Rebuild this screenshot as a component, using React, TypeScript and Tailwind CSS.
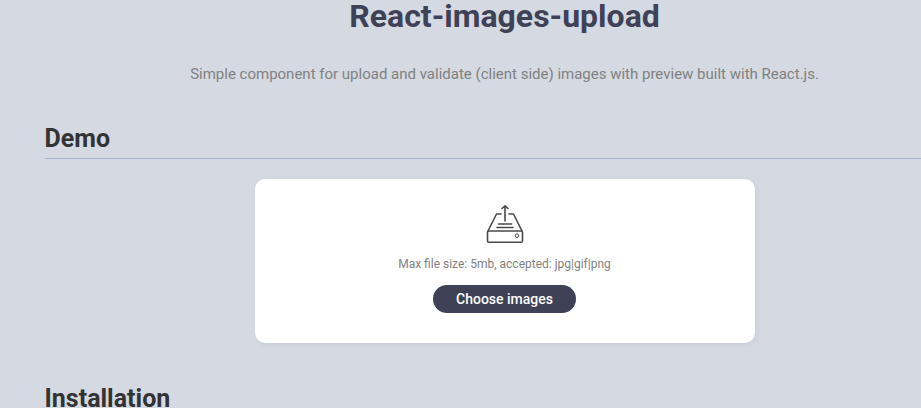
export default function App() {
  return (
    <main className="h-[408px] w-[921px] overflow-hidden bg-[#d5d9e2] font-['Roboto',sans-serif]">
      <div className="w-[921px] pl-[44.5px]">
        <header className="w-[920px] text-center">
          <h1 className="h-[34px] text-[32px] leading-[32px] font-bold text-[#3f4257]">React-images-upload</h1>
          <p className="mt-[30px] text-[15px] leading-5 text-[#818181]">
            Simple component for upload and validate (client side) images with preview built with React.js.
          </p>
        </header>
        <h2 className="mt-[40px] h-[35px] border-b border-[#a5b4d0] text-[25px] leading-[29px] font-bold text-[#333]">Demo</h2>
        <div className="mt-5 flex w-[920px] justify-center">
          <section className="flex h-[164px] w-[500px] flex-col items-center rounded-[10px] bg-white pt-[25px] shadow-[2px_2px_5px_0_rgba(0,0,0,0.05)]">
            <svg width="38" height="40" viewBox="0 0 38 40" fill="none" stroke="#4a4a4a" strokeWidth="1.6" strokeLinejoin="round" strokeLinecap="round">
              <path d="M15 10H10.5L2 27M23 10H27.5L36 27" />
              <rect x="1.5" y="27" width="35" height="11.3" rx="1.3" />
              <path d="M19 17V1.8M16 4.5L19 1.8L22 4.5M12.5 20H25.5M11 23.5H27" />
              <ellipse cx="31" cy="31.7" rx="1.6" ry="1.9" strokeWidth="1" />
            </svg>
            <p className="mt-3 text-[12px] leading-4 text-[#818181]">Max file size: 5mb, accepted: jpg|gif|png</p>
            <button className="mt-[13px] h-7 w-[143px] rounded-full bg-[#3f4257] text-[14px] font-medium text-white">Choose images</button>
          </section>
        </div>
        <h2 className="mt-[41px] h-[35px] text-[25px] leading-[29px] font-bold text-[#333]">Installation</h2>
      </div>
    </main>
  );
}
